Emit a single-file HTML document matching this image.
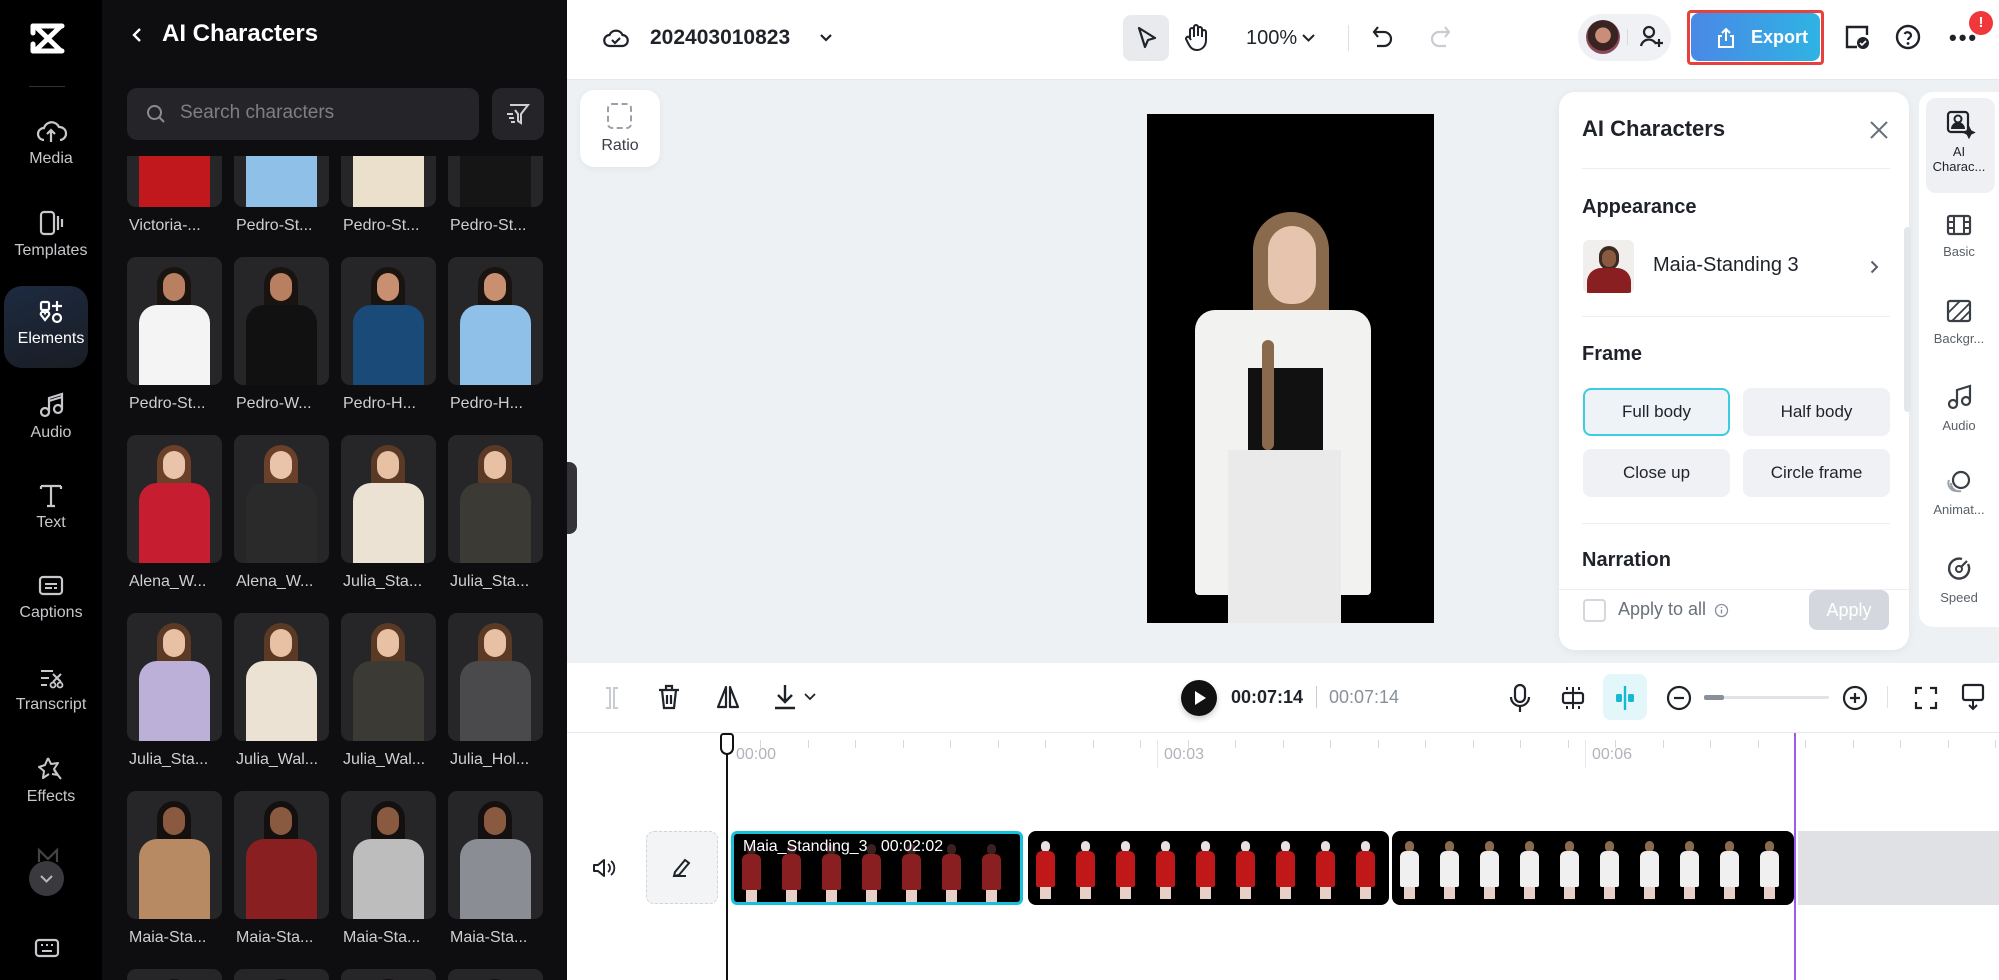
<!DOCTYPE html>
<html><head><meta charset="utf-8"><style>
*{box-sizing:border-box;margin:0;padding:0}
html{width:1999px;height:980px;overflow:hidden}
body{width:1999px;height:980px;overflow:hidden;font-family:"Liberation Sans",sans-serif;background:#eef1f4;position:relative}
.a{position:absolute}
.rail{left:0;top:0;width:102px;height:980px;background:#000;overflow:hidden}
.ri{position:absolute;left:0;width:102px;text-align:center;color:#c8c8cc;font-size:16px}
.ri svg{display:block;margin:0 auto 6px}
.panel{left:102px;top:0;width:475px;height:980px;overflow:hidden}
.pbg{left:0;top:0;width:465px;height:980px;background:#0e0e10}
.tile{position:absolute;width:95px;height:128px;background:#262628;border-radius:9px;overflow:hidden}
.lbl{position:absolute;width:100px;color:#cfcfd2;font-size:16px;white-space:nowrap}
.fig{position:absolute}
.top{left:567px;top:0;width:1432px;height:79px;background:#fff}
.card{background:#fff;border-radius:16px}
.btn{position:absolute;width:147px;height:48px;border-radius:8px;background:#eff1f4;font-size:17px;color:#1f2329;text-align:center;line-height:48px}
.tab{position:absolute;left:1919px;width:80px;text-align:center;font-size:13px;color:#5a6068}
.tab svg{display:block;margin:0 auto 8px}
svg{overflow:visible}
</style></head><body>

<!-- left rail -->
<div class="a rail">
 <svg class="a" style="left:29px;top:22px" width="38" height="34" viewBox="0 0 38 34"><path d="M4 4H33" stroke="#fff" stroke-width="5" stroke-linecap="round"/><path d="M4 29H33" stroke="#fff" stroke-width="5" stroke-linecap="round"/><path d="M6 4L32 29" stroke="#fff" stroke-width="5" stroke-linecap="round"/><path d="M32 4L6 29" stroke="#fff" stroke-width="5" stroke-linecap="round"/><path d="M4 4v7M4 29v-7" stroke="#fff" stroke-width="5" stroke-linecap="round"/></svg>
 <div class="a" style="left:29px;top:86px;width:36px;height:1px;background:#333"></div>
 <div class="ri" style="top:118px"><svg width="30" height="26" viewBox="0 0 30 26"><path d="M8 22a6 6 0 010-12 8 8 0 0115-1 6 6 0 011 13M15 24V12m-4 4l4-4 4 4" stroke="#c8c8cc" stroke-width="2.2" fill="none"/></svg>Media</div>
 <div class="ri" style="top:210px"><svg width="30" height="26" viewBox="0 0 30 26"><rect x="5" y="2" width="13" height="22" rx="3" stroke="#c8c8cc" stroke-width="2.2" fill="none"/><path d="M22 6v14M26 9v8" stroke="#c8c8cc" stroke-width="2.2"/></svg>Templates</div>
 <div class="a" style="left:4px;top:286px;width:84px;height:82px;border-radius:18px;background:linear-gradient(160deg,#1c2a40,#1a1d24)"></div>
 <div class="ri" style="top:300px;color:#fff"><svg width="26" height="24" viewBox="0 0 26 24"><rect x="3" y="2" width="8" height="8" rx="1.5" stroke="#fff" stroke-width="2.2" fill="none"/><path d="M19 1v10M14 6h10M3 15l4 5 4-5a2 2 0 00-4-2 2 2 0 00-4 2" stroke="#fff" stroke-width="2.2" fill="none"/><circle cx="19" cy="18" r="4" stroke="#fff" stroke-width="2.2" fill="none"/></svg>Elements</div>
 <div class="ri" style="top:392px"><svg width="26" height="26" viewBox="0 0 26 26"><circle cx="7" cy="20" r="4" stroke="#c8c8cc" stroke-width="2.2" fill="none"/><circle cx="20" cy="17" r="4" stroke="#c8c8cc" stroke-width="2.2" fill="none"/><path d="M11 20V6l13-4v15M11 9l13-4" stroke="#c8c8cc" stroke-width="2.2" fill="none"/></svg>Audio</div>
 <div class="ri" style="top:482px"><svg width="26" height="26" viewBox="0 0 26 26"><path d="M3 4h20M13 4v20M3 4v3M23 4v3M9 24h8" stroke="#c8c8cc" stroke-width="2.2" fill="none"/></svg>Text</div>
 <div class="ri" style="top:574px"><svg width="28" height="24" viewBox="0 0 28 24"><rect x="3" y="3" width="22" height="17" rx="3" stroke="#c8c8cc" stroke-width="2.2" fill="none"/><path d="M8 10h12M8 14h7M17 14h3" stroke="#c8c8cc" stroke-width="2"/></svg>Captions</div>
 <div class="ri" style="top:666px"><svg width="28" height="24" viewBox="0 0 28 24"><path d="M4 5h12M4 12h8M4 19h6" stroke="#c8c8cc" stroke-width="2"/><path d="M16 8l8 8M24 8l-8 8" stroke="#c8c8cc" stroke-width="2"/><circle cx="16" cy="19" r="2.5" stroke="#c8c8cc" stroke-width="1.8" fill="none"/><circle cx="23" cy="19" r="2.5" stroke="#c8c8cc" stroke-width="1.8" fill="none"/></svg>Transcript</div>
 <div class="ri" style="top:756px"><svg width="28" height="26" viewBox="0 0 28 26"><path d="M11 2l3 6 7-1-4 6 4 6-6-1M17 14l7 9M11 2L8 9 2 11l5 4-1 7 6-4" stroke="#c8c8cc" stroke-width="2" fill="none" stroke-linejoin="round"/></svg>Effects</div>
 <svg class="a" style="left:37px;top:848px" width="22" height="14" viewBox="0 0 22 14"><path d="M2 14V2l9 9 9-9v12" stroke="#444" stroke-width="2.2" fill="none"/></svg>
 <div class="a" style="left:29px;top:861px;width:35px;height:35px;border-radius:50%;background:#3a3a3e"></div>
 <svg class="a" style="left:40px;top:875px" width="13" height="8" viewBox="0 0 13 8"><path d="M1 1l5.5 5.5L12 1" stroke="#b8b8bc" stroke-width="2" fill="none"/></svg>
 <svg class="a" style="left:34px;top:938px" width="26" height="20" viewBox="0 0 26 20"><rect x="2" y="2" width="22" height="16" rx="3" stroke="#c8c8cc" stroke-width="2.2" fill="none"/><path d="M7 7h2M12 7h2M17 7h2M8 13h10" stroke="#c8c8cc" stroke-width="2"/></svg>
</div>

<!-- panel -->
<div class="a panel">
 <div class="a pbg"></div>
 <svg class="a" style="left:30px;top:27px" width="10" height="16" viewBox="0 0 10 16"><path d="M8 2L2 8l6 6" stroke="#fff" stroke-width="2.4" fill="none"/></svg>
 <div class="a" style="left:60px;top:20px;color:#fff;font-size:24px;font-weight:bold">AI Characters</div>
 <div class="a" style="left:25px;top:88px;width:352px;height:52px;border-radius:10px;background:#252529"></div>
 <svg class="a" style="left:44px;top:104px" width="20" height="20" viewBox="0 0 20 20"><circle cx="8.5" cy="8.5" r="6.5" stroke="#8a8a90" stroke-width="2" fill="none"/><path d="M13.5 13.5l4.5 4.5" stroke="#8a8a90" stroke-width="2"/></svg>
 <div class="a" style="left:78px;top:102px;color:#7e7e84;font-size:19px">Search characters</div>
 <div class="a" style="left:390px;top:88px;width:52px;height:52px;border-radius:10px;background:#252529"></div>
 <svg class="a" style="left:404px;top:102px" width="24" height="24" viewBox="0 0 24 24"><path d="M4 3h18l-7 9v9l-3-2v-7L9 8M1 12h6M3 16h5M5 20h4" stroke="#d0d0d4" stroke-width="2" fill="none"/></svg>
 <div class="a" style="left:25px;top:156px;width:420px;height:824px;overflow:hidden">
  <div id="grid" style="position:absolute;left:0;top:-77px;width:420px;height:900px"></div>
 </div>
 <div class="a" style="left:465px;top:462px;width:10px;height:72px;background:#333338;border-radius:0 8px 8px 0"></div>
</div>

<!-- top bar -->
<div class="a top">
 <svg class="a" style="left:36px;top:26px" width="26" height="24" viewBox="0 0 26 24"><path d="M7 20a5.5 5.5 0 01-.5-11 7 7 0 0113 0 5.5 5.5 0 01-.5 11z" stroke="#1f2329" stroke-width="2.2" fill="none"/><path d="M9 14l3 3 5-5" stroke="#1f2329" stroke-width="2.2" fill="none"/></svg>
 <div class="a" style="left:83px;top:26px;font-size:21px;font-weight:bold;color:#1f2329">202403010823</div>
 <svg class="a" style="left:252px;top:33px" width="14" height="9" viewBox="0 0 14 9"><path d="M2 2l5 5 5-5" stroke="#1f2329" stroke-width="2.2" fill="none"/></svg>
 <div class="a" style="left:556px;top:15px;width:46px;height:46px;border-radius:8px;background:#e8eaee"></div>
 <svg class="a" style="left:569px;top:26px" width="22" height="26" viewBox="0 0 22 26"><path d="M3 2l16 10-7 2-3 7z" stroke="#1f2329" stroke-width="2.2" fill="none" stroke-linejoin="round"/></svg>
 <svg class="a" style="left:617px;top:24px" width="24" height="28" viewBox="0 0 24 28"><path d="M6 14V6a2 2 0 014 0v7M10 12V3a2 2 0 014 0v9M14 12V5a2 2 0 014 0v8M18 12V8a2 2 0 014 0v8c0 6-4 10-9 10s-7-3-9-7l-2-4a2 2 0 013-2l2 3" stroke="#1f2329" stroke-width="2" fill="none"/></svg>
 <div class="a" style="left:679px;top:27px;font-size:20px;color:#1f2329">100%</div>
 <svg class="a" style="left:735px;top:34px" width="13" height="8" viewBox="0 0 13 8"><path d="M1 1l5.5 5.5L12 1" stroke="#1f2329" stroke-width="2" fill="none"/></svg>
 <div class="a" style="left:781px;top:25px;width:1px;height:26px;background:#dde0e4"></div>
 <svg class="a" style="left:805px;top:25px" width="22" height="26" viewBox="0 0 22 26"><path d="M6 2L2 7l4 5M2 7h10a7 7 0 010 14H5" stroke="#1f2329" stroke-width="2.2" fill="none"/></svg>
 <svg class="a" style="left:862px;top:25px" width="22" height="26" viewBox="0 0 22 26"><path d="M16 2l4 5-4 5M20 7H10a7 7 0 000 14h7" stroke="#c9ccd1" stroke-width="2.2" fill="none"/></svg>
 <div class="a" style="left:1011px;top:14px;width:93px;height:47px;border-radius:24px;background:#f0f1f4"></div>
 <div class="a" style="left:1019px;top:20px;width:34px;height:34px;border-radius:50%;background:radial-gradient(circle at 50% 45%,#c98e7a 0 30%,#3a2422 32% 60%,#8a4a5a 62%)"></div>
 <div class="a" style="left:1060px;top:29px;width:1px;height:16px;background:#d6d8dc"></div>
 <svg class="a" style="left:1072px;top:24px" width="26" height="26" viewBox="0 0 26 26"><circle cx="10" cy="8" r="5" stroke="#1f2329" stroke-width="2.2" fill="none"/><path d="M2 22a8 8 0 0115-2M20 15v8M16 19h8" stroke="#1f2329" stroke-width="2.2" fill="none"/></svg>
 <div class="a" style="left:1120px;top:10px;width:137px;height:55px;border:3px solid #e8413d;border-radius:4px"></div>
 <div class="a" style="left:1124px;top:13px;width:129px;height:48px;border-radius:8px;background:linear-gradient(90deg,#4a88e6,#2fb3e3);color:#fff;font-size:18px;font-weight:bold;line-height:48px;padding-left:60px">Export</div>
 <svg class="a" style="left:1148px;top:27px" width="22" height="22" viewBox="0 0 22 22"><path d="M7 9H4v11h14V9h-3M11 14V2M7 6l4-4 4 4" stroke="#fff" stroke-width="2" fill="none"/></svg>
 <svg class="a" style="left:1276px;top:23px" width="28" height="28" viewBox="0 0 28 28"><path d="M14 24H4V4h20v8" stroke="#1f2329" stroke-width="2.4" fill="none"/><circle cx="20" cy="20" r="6" fill="#1f2329"/><path d="M17 20l2 2 4-4" stroke="#fff" stroke-width="1.6" fill="none"/></svg>
 <svg class="a" style="left:1327px;top:23px" width="28" height="28" viewBox="0 0 28 28"><circle cx="14" cy="14" r="11" stroke="#1f2329" stroke-width="2.4" fill="none"/><path d="M10.5 11a3.5 3.5 0 016.5 1.5c0 2-3 2.5-3 4.5" stroke="#1f2329" stroke-width="2.2" fill="none"/><circle cx="14" cy="20.5" r="1.4" fill="#1f2329"/></svg>
 <div class="a" style="left:1382px;top:34px;font-size:22px;letter-spacing:2px;color:#1f2329;font-weight:bold;line-height:8px">•••</div>
 <div class="a" style="left:1402px;top:11px;width:24px;height:24px;border-radius:50%;background:#f0373a;color:#fff;font-size:15px;font-weight:bold;text-align:center;line-height:24px">!</div>
</div>
<div class="a" style="left:567px;top:79px;width:1432px;height:1px;background:#e6e8eb"></div>

<!-- Ratio -->
<div class="a card" style="left:580px;top:90px;width:80px;height:77px;border-radius:14px;box-shadow:0 2px 8px rgba(0,0,0,.05)"></div>
<div class="a" style="left:607px;top:103px;width:25px;height:26px;border:2px dashed #9aa0a8;border-radius:5px"></div>
<div class="a" style="left:580px;top:137px;width:80px;text-align:center;font-size:16px;color:#3a3f45">Ratio</div>

<!-- video -->
<div class="a" style="left:1147px;top:114px;width:287px;height:509px;background:#000;overflow:hidden">
 <div class="a" style="left:106px;top:98px;width:76px;height:250px;border-radius:38px 38px 20px 20px;background:#8a6a4c"></div>
 <div class="a" style="left:121px;top:112px;width:48px;height:78px;border-radius:24px 24px 22px 22px;background:#e7c4ad"></div>
 <div class="a" style="left:48px;top:196px;width:176px;height:285px;border-radius:20px 20px 4px 4px;background:#f2f2f0"></div>
 <div class="a" style="left:101px;top:254px;width:75px;height:84px;background:#111"></div>
 <div class="a" style="left:81px;top:336px;width:113px;height:173px;background:#eaeaea"></div>
 <div class="a" style="left:115px;top:226px;width:12px;height:110px;background:#8a6a4c;border-radius:6px"></div>
</div>

<!-- right panel -->
<div class="a card" style="left:1559px;top:92px;width:350px;height:558px;box-shadow:0 2px 10px rgba(0,0,0,.06)"></div>
<div class="a" style="left:1582px;top:116px;font-size:22px;font-weight:bold;color:#1f2329">AI Characters</div>
<svg class="a" style="left:1870px;top:121px" width="18" height="18" viewBox="0 0 18 18"><path d="M1 1l16 16M17 1L1 17" stroke="#6a7079" stroke-width="2"/></svg>
<div class="a" style="left:1582px;top:168px;width:308px;height:1px;background:#eceef1"></div>
<div class="a" style="left:1904px;top:227px;width:7px;height:185px;border-radius:4px;background:#e4e6ea"></div>
<div class="a" style="left:1582px;top:196px;font-size:20px;font-weight:bold;color:#1f2329">Appearance</div>
<div class="a" style="left:1583px;top:240px;width:51px;height:53px;border-radius:6px;background:#f0efee;overflow:hidden">
 <div class="a" style="left:16px;top:6px;width:20px;height:24px;border-radius:10px;background:#3a2a22"></div>
 <div class="a" style="left:19px;top:10px;width:14px;height:17px;border-radius:7px;background:#8a5a40"></div>
 <div class="a" style="left:4px;top:28px;width:44px;height:30px;border-radius:14px 14px 0 0;background:#8a1f22"></div>
</div>
<div class="a" style="left:1653px;top:254px;font-size:20px;color:#1f2329">Maia-Standing 3</div>
<svg class="a" style="left:1870px;top:260px" width="9" height="14" viewBox="0 0 9 14"><path d="M1.5 1.5l5.5 5.5-5.5 5.5" stroke="#5a6068" stroke-width="2" fill="none"/></svg>
<div class="a" style="left:1582px;top:316px;width:308px;height:1px;background:#eceef1"></div>
<div class="a" style="left:1582px;top:343px;font-size:20px;font-weight:bold;color:#1f2329">Frame</div>
<div class="btn" style="left:1583px;top:388px;background:#eef3f7;border:2px solid #3ccbe0;line-height:44px">Full body</div>
<div class="btn" style="left:1743px;top:388px">Half body</div>
<div class="btn" style="left:1583px;top:449px">Close up</div>
<div class="btn" style="left:1743px;top:449px">Circle frame</div>
<div class="a" style="left:1582px;top:523px;width:308px;height:1px;background:#eceef1"></div>
<div class="a" style="left:1582px;top:549px;font-size:20px;font-weight:bold;color:#1f2329">Narration</div>
<div class="a" style="left:1559px;top:589px;width:350px;height:1px;background:#eceef1"></div>
<div class="a" style="left:1583px;top:599px;width:23px;height:23px;border:2px solid #d4d7dc;border-radius:4px;background:#fff"></div>
<div class="a" style="left:1618px;top:599px;font-size:18px;color:#6a7079">Apply to all</div>
<svg class="a" style="left:1714px;top:603px" width="15" height="15" viewBox="0 0 15 15"><circle cx="7.5" cy="7.5" r="6" stroke="#8a9099" stroke-width="1.3" fill="none"/><path d="M7.5 6.5v4M7.5 4v1" stroke="#8a9099" stroke-width="1.4"/></svg>
<div class="a" style="left:1809px;top:590px;width:80px;height:40px;border-radius:8px;background:#d4d8de;color:#fff;font-size:18px;text-align:center;line-height:40px">Apply</div>

<!-- right tabs -->
<div class="a card" style="left:1919px;top:92px;width:80px;height:535px;border-radius:14px 0 0 14px"></div>
<div class="a" style="left:1926px;top:98px;width:69px;height:95px;border-radius:10px;background:#eef0f3"></div>
<div class="tab" style="top:110px;color:#1f2329"><svg width="28" height="26" viewBox="0 0 28 26"><rect x="3" y="2" width="20" height="20" rx="3" stroke="#1f2329" stroke-width="2.2" fill="none"/><circle cx="13" cy="9" r="3.5" stroke="#1f2329" stroke-width="2" fill="none"/><path d="M7 19a6 6 0 0112 0M24 18l1.5 3 3 1.5-3 1.5-1.5 3-1.5-3-3-1.5 3-1.5z" stroke="#1f2329" stroke-width="2" fill="#1f2329"/></svg>AI<br>Charac...</div>
<div class="tab" style="top:214px"><svg width="26" height="22" viewBox="0 0 26 22"><rect x="2" y="2" width="22" height="18" rx="2" stroke="#3a3f45" stroke-width="2.2" fill="none"/><path d="M8 2v18M18 2v18M2 8h6M2 14h6M18 8h6M18 14h6" stroke="#3a3f45" stroke-width="2"/></svg>Basic</div>
<div class="tab" style="top:299px"><svg width="26" height="24" viewBox="0 0 26 24"><rect x="2" y="2" width="22" height="20" rx="2" stroke="#3a3f45" stroke-width="2.2" fill="none"/><path d="M2 14L14 2M6 22L24 4M14 22l10-10" stroke="#3a3f45" stroke-width="1.8"/></svg>Backgr...</div>
<div class="tab" style="top:384px"><svg width="26" height="26" viewBox="0 0 26 26"><circle cx="7" cy="20" r="4" stroke="#3a3f45" stroke-width="2.2" fill="none"/><circle cx="20" cy="17" r="4" stroke="#3a3f45" stroke-width="2.2" fill="none"/><path d="M11 20V6l13-4v15" stroke="#3a3f45" stroke-width="2.2" fill="none"/></svg>Audio</div>
<div class="tab" style="top:470px"><svg width="28" height="24" viewBox="0 0 28 24"><circle cx="16" cy="10" r="8" stroke="#3a3f45" stroke-width="2.2" fill="none"/><path d="M6 13a8 8 0 0010 8M4 10a8 8 0 007 11" stroke="#9aa0a8" stroke-width="2" fill="none"/></svg>Animat...</div>
<div class="tab" style="top:556px"><svg width="26" height="26" viewBox="0 0 26 26"><path d="M22 8a10 10 0 11-6-5" stroke="#3a3f45" stroke-width="2.4" fill="none"/><circle cx="13" cy="13" r="3" stroke="#3a3f45" stroke-width="2" fill="none"/><path d="M15 11l6-6" stroke="#3a3f45" stroke-width="2.2"/></svg>Speed</div>

<!-- timeline -->
<div class="a" style="left:567px;top:663px;width:1432px;height:317px;background:#fff;overflow:hidden"><div id="ticks"></div></div>
<div class="a" style="left:567px;top:732px;width:1432px;height:1px;background:#e6e8eb"></div>
<svg class="a" style="left:603px;top:686px" width="18" height="24" viewBox="0 0 18 24"><path d="M3 2h4v20H3M15 2h-4v20h4" stroke="#c9ccd1" stroke-width="2" fill="none"/></svg>
<svg class="a" style="left:657px;top:684px" width="24" height="26" viewBox="0 0 24 26"><path d="M2 6h20M9 6V2h6v4M5 6l2 18h10l2-18M10 11v9M14 11v9" stroke="#1f2329" stroke-width="2.2" fill="none"/></svg>
<svg class="a" style="left:715px;top:684px" width="26" height="26" viewBox="0 0 26 26"><path d="M11 3L3 23h8zM15 3l8 20h-8z" stroke="#1f2329" stroke-width="2.2" fill="none" stroke-linejoin="round"/></svg>
<svg class="a" style="left:772px;top:683px" width="26" height="28" viewBox="0 0 26 28"><path d="M13 2v17M6 12l7 7 7-7M3 25h20" stroke="#1f2329" stroke-width="2.4" fill="none"/></svg>
<svg class="a" style="left:804px;top:693px" width="12" height="8" viewBox="0 0 12 8"><path d="M1 1l5 5 5-5" stroke="#1f2329" stroke-width="1.8" fill="none"/></svg>
<div class="a" style="left:1181px;top:680px;width:36px;height:36px;border-radius:50%;background:#111;box-shadow:0 3px 6px rgba(0,0,0,.2)"></div>
<svg class="a" style="left:1195px;top:691px" width="11" height="14" viewBox="0 0 11 14"><path d="M0 0l11 7-11 7z" fill="#fff"/></svg>
<div class="a" style="left:1231px;top:687px;font-size:18px;font-weight:bold;color:#1f2329">00:07:14</div>
<div class="a" style="left:1316px;top:686px;width:1px;height:22px;background:#c9ccd1"></div>
<div class="a" style="left:1329px;top:687px;font-size:18px;color:#8a9099">00:07:14</div>
<svg class="a" style="left:1509px;top:683px" width="22" height="30" viewBox="0 0 22 30"><rect x="6" y="2" width="10" height="17" rx="5" stroke="#1f2329" stroke-width="2.2" fill="none"/><path d="M2 14a9 9 0 0018 0M11 23v6" stroke="#1f2329" stroke-width="2.2" fill="none"/></svg>
<svg class="a" style="left:1559px;top:684px" width="28" height="28" viewBox="0 0 28 28"><rect x="4" y="9" width="20" height="10" rx="2" stroke="#1f2329" stroke-width="2.2" fill="none"/><path d="M14 3v22M8 3v3M20 3v3M8 22v3M20 22v3" stroke="#1f2329" stroke-width="2"/></svg>
<div class="a" style="left:1603px;top:674px;width:44px;height:46px;border-radius:8px;background:#e3f6fa"></div>
<svg class="a" style="left:1612px;top:684px" width="26" height="28" viewBox="0 0 26 28"><path d="M13 2v24" stroke="#18b8d3" stroke-width="2.4"/><rect x="4" y="10" width="6" height="8" rx="1.5" fill="#18b8d3"/><rect x="16" y="10" width="6" height="8" rx="1.5" fill="#18b8d3"/></svg>
<svg class="a" style="left:1666px;top:685px" width="26" height="26" viewBox="0 0 26 26"><circle cx="13" cy="13" r="11" stroke="#1f2329" stroke-width="2.2" fill="none"/><path d="M8 13h10" stroke="#1f2329" stroke-width="2.2"/></svg>
<div class="a" style="left:1704px;top:696px;width:125px;height:3px;background:#dfe2e6;border-radius:2px"></div>
<div class="a" style="left:1704px;top:695px;width:20px;height:5px;background:#8a9099;border-radius:2px"></div>
<svg class="a" style="left:1842px;top:685px" width="26" height="26" viewBox="0 0 26 26"><circle cx="13" cy="13" r="11" stroke="#1f2329" stroke-width="2.2" fill="none"/><path d="M8 13h10M13 8v10" stroke="#1f2329" stroke-width="2.2"/></svg>
<div class="a" style="left:1887px;top:686px;width:1px;height:22px;background:#e0e2e6"></div>
<svg class="a" style="left:1914px;top:686px" width="24" height="24" viewBox="0 0 24 24"><path d="M2 8V2h6M16 2h6v6M22 16v6h-6M8 22H2v-6" stroke="#1f2329" stroke-width="2.2" fill="none"/></svg>
<svg class="a" style="left:1961px;top:683px" width="24" height="28" viewBox="0 0 24 28"><rect x="2" y="2" width="20" height="15" rx="2" stroke="#1f2329" stroke-width="2.2" fill="none"/><path d="M12 17v8M8 22l4 4 4-4" stroke="#1f2329" stroke-width="2" fill="none"/></svg>

<!-- ruler -->
<div class="a" style="left:736px;top:746px;font-size:16px;color:#b0b4ba">00:00</div>
<div class="a" style="left:1164px;top:746px;font-size:16px;color:#b0b4ba">00:03</div>
<div class="a" style="left:1592px;top:746px;font-size:16px;color:#b0b4ba">00:06</div>
<div class="a" style="left:1157px;top:740px;width:1px;height:28px;background:#e6e8eb"></div>
<div class="a" style="left:1585px;top:740px;width:1px;height:28px;background:#e6e8eb"></div>
<div class="a" style="left:1794px;top:733px;width:2px;height:247px;background:#9a5cf0"></div>

<!-- track -->
<svg class="a" style="left:591px;top:856px" width="24" height="24" viewBox="0 0 24 24"><path d="M3 9h4l6-5v16l-6-5H3z" stroke="#1f2329" stroke-width="2" fill="none" stroke-linejoin="round"/><path d="M17 8a5 5 0 010 8M20 5a9 9 0 010 14" stroke="#1f2329" stroke-width="1.8" fill="none"/></svg>
<div class="a" style="left:646px;top:831px;width:72px;height:73px;border:1.5px dashed #d0d3d8;border-radius:8px;background:#f3f4f6"></div>
<svg class="a" style="left:671px;top:856px" width="22" height="22" viewBox="0 0 22 22"><path d="M4 16l10-12 4 3-10 12-5 1z M3 20h12" stroke="#1f2329" stroke-width="2" fill="none"/></svg>
<div class="a" style="left:731px;top:831px;width:292px;height:74px;border:3px solid #18c0dc;border-radius:6px;background:#000;overflow:hidden" id="c1"></div>
<div class="a" style="left:743px;top:838px;font-size:16px;color:#fff">Maia_Standing_3&nbsp;&nbsp;&nbsp;00:02:02</div>
<div class="a" style="left:1028px;top:831px;width:361px;height:74px;border-radius:8px;background:#000;overflow:hidden" id="c2"></div>
<div class="a" style="left:1392px;top:831px;width:402px;height:74px;border-radius:8px;background:#000;overflow:hidden" id="c3"></div>
<div class="a" style="left:1798px;top:831px;width:201px;height:74px;background:#dfe1e4"></div>
<!-- playhead -->
<div class="a" style="left:726px;top:735px;width:2px;height:245px;background:#111"></div>
<div class="a" style="left:720px;top:733px;width:14px;height:22px;border:2px solid #111;border-radius:4px 4px 8px 8px;background:#fff"></div>

<script>
var g=document.getElementById('grid');
var rows=[
 [['Victoria-...','#c0181c','#7a4a30','#e8c0a8'],['Pedro-St...','#8ec0e8','#1a1410','#c89070'],['Pedro-St...','#ebe0cc','#1a1410','#c89070'],['Pedro-St...','#151515','#1a1410','#7a5040']],
 [['Pedro-St...','#f4f4f4','#1a1410','#b88060'],['Pedro-W...','#111','#1a1410','#b88060'],['Pedro-H...','#1a4a78','#1a1410','#c89070'],['Pedro-H...','#8ec0e8','#1a1410','#c89070']],
 [['Alena_W...','#c61e30','#6a4028','#eac4aa'],['Alena_W...','#2a2a2a','#6a4028','#eac4aa'],['Julia_Sta...','#ece2d4','#5a3a24','#e8c0a4'],['Julia_Sta...','#3c3a34','#5a3a24','#e8c0a4']],
 [['Julia_Sta...','#bcb0d8','#5a3a24','#e8c0a4'],['Julia_Wal...','#ece2d4','#5a3a24','#e8c0a4'],['Julia_Wal...','#3c3a34','#5a3a24','#e8c0a4'],['Julia_Hol...','#4a4a4c','#5a3a24','#e8c0a4']],
 [['Maia-Sta...','#b88a64','#141010','#8a5a40'],['Maia-Sta...','#8a1f22','#141010','#8a5a40'],['Maia-Sta...','#bdbdbd','#141010','#8a5a40'],['Maia-Sta...','#8a8e94','#141010','#8a5a40']],
 [['Maia-Sta...','#555','#141010','#8a5a40'],['Maia-Sta...','#555','#141010','#8a5a40'],['Maia-Sta...','#555','#141010','#8a5a40'],['Maia-Sta...','#555','#141010','#8a5a40']]
];
var h='';
rows.forEach(function(r,i){r.forEach(function(c,j){
 var x=j*107,y=i*178;
 h+='<div class="tile" style="left:'+x+'px;top:'+y+'px">'+
 '<div class="fig" style="left:30px;top:10px;width:34px;height:50px;border-radius:17px 17px 8px 8px;background:'+c[2]+'"></div>'+
 '<div class="fig" style="left:36px;top:16px;width:22px;height:28px;border-radius:11px;background:'+c[3]+'"></div>'+
 '<div class="fig" style="left:12px;top:48px;width:71px;height:80px;border-radius:18px 18px 0 0;background:'+c[1]+'"></div></div>'+
 (i<5?'<div class="lbl" style="left:'+(x+2)+'px;top:'+(y+138)+'px">'+c[0]+'</div>':'');
});});
g.innerHTML=h;
var t='';for(var x=193;x<1432;x+=47.5){t+='<div class="a" style="left:'+Math.round(x)+'px;top:77px;width:1px;height:8px;background:#d6d9dd"></div>';}
document.getElementById('ticks').innerHTML=t;
function fill(id,n,w,body,hat){var e=document.getElementById(id),s='';for(var i=0;i<n;i++){var x=8+i*w;
 s+='<div class="a" style="left:'+(x+5)+'px;top:10px;width:9px;height:11px;border-radius:5px;background:'+hat+'"></div><div class="a" style="left:'+x+'px;top:20px;width:19px;height:36px;border-radius:6px 6px 2px 2px;background:'+body+'"></div><div class="a" style="left:'+(x+4)+'px;top:56px;width:11px;height:12px;background:#e8d0c8"></div>';}
 e.innerHTML=s;}
fill('c1',7,40,'#8a1f22','#3a2020');fill('c2',9,40,'#c01818','#e8e0e0');fill('c3',10,40,'#f0f0f0','#8a6a4c');
</script>
</body></html>
